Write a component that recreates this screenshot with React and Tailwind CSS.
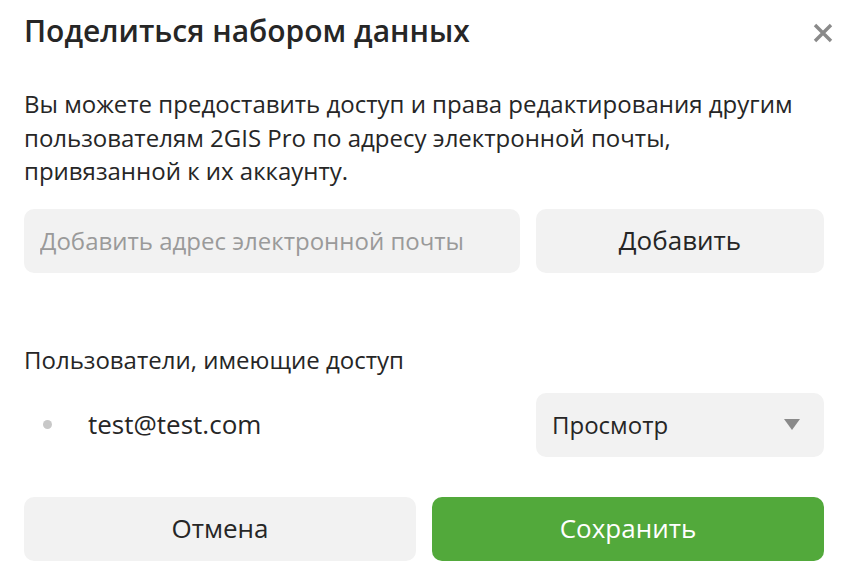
export default function App() {
    return (
        <div className="w-[860px] h-[588px] bg-white pl-6 pr-9 pt-[13px] font-['Open_Sans',sans-serif] text-[#262626]">
            <div className="flex items-center justify-between h-9">
                <h1 className="text-[30px] font-semibold leading-9">Поделиться набором данных</h1>
                <button className="mr-[-11px] mt-[4px] w-6 h-6 flex items-center justify-center">
                    <svg width="20" height="20" viewBox="0 0 20 20">
                        <path d="M2 2 L18 18 M18 2 L2 18" stroke="#8a8a8a" strokeWidth="3.4" />
                    </svg>
                </button>
            </div>

            <p className="mt-[38px] text-[24px] leading-[33.5px]">
                Вы можете предоставить доступ и права редактирования другим пользователям 2GIS Pro по адресу электронной почты, привязанной к их аккаунту.
            </p>

            <div className="mt-[21px] flex gap-4">
                <input
                    placeholder="Добавить адрес электронной почты"
                    className="flex-1 min-w-0 h-16 rounded-[10px] bg-[#f2f2f2] px-4 text-[24px] outline-none placeholder:text-[#9a9a9a]"
                />
                <button className="w-[288px] h-16 rounded-[10px] bg-[#f2f2f2] text-[26px]">Добавить</button>
            </div>

            <div className="mt-[73px] text-[24px] leading-7">Пользователи, имеющие доступ</div>

            <div className="mt-[19px] flex items-center">
                <span className="ml-[19px] w-[9px] h-[9px] rounded-full bg-[#c8c8c8]"></span>
                <span className="ml-9 flex-1 text-[26px]">test@test.com</span>
                <button className="w-[288px] h-16 rounded-[10px] bg-[#f2f2f2] flex items-center justify-between pl-4 pr-6 text-[24px]">
                    <span>Просмотр</span>
                    <svg width="16" height="11" viewBox="0 0 16 11">
                        <path d="M0 0 H16 L8 11 Z" fill="#8a8a8a" />
                    </svg>
                </button>
            </div>

            <div className="mt-10 flex gap-4">
                <button className="flex-1 h-16 rounded-[10px] bg-[#f2f2f2] text-[26px]">Отмена</button>
                <button className="flex-1 h-16 rounded-[10px] bg-[#52a93b] text-white text-[26px]">Сохранить</button>
            </div>
        </div>
    );
}
